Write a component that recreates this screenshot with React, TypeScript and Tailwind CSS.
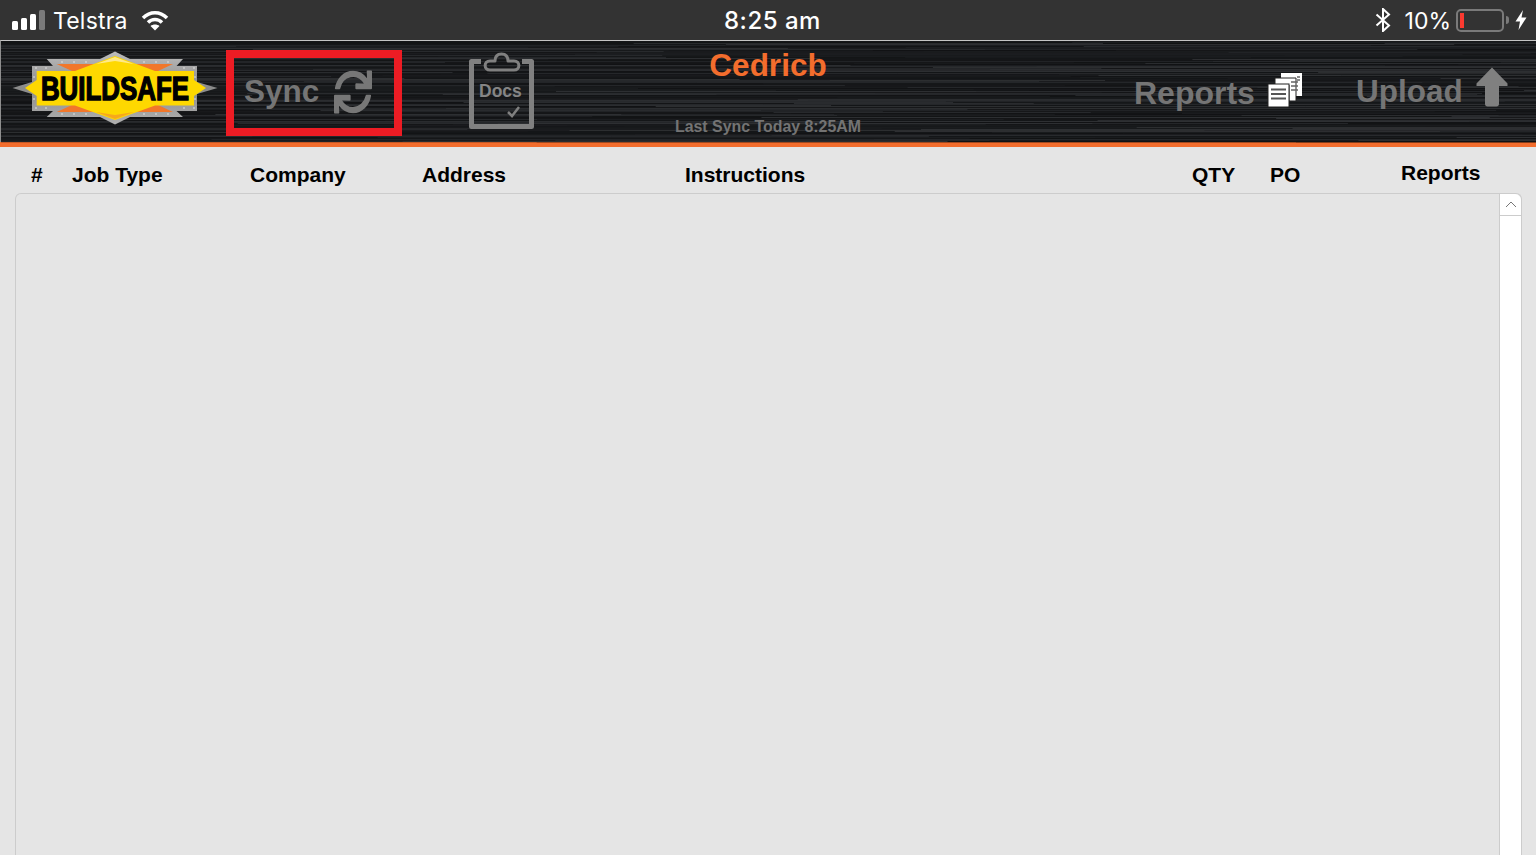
import { FaSync } from "react-icons/fa";

const helv = "font-['Liberation_Sans',Arial,sans-serif]";

const columns = ["#", "Job Type", "Company", "Address", "Instructions", "QTY", "PO"];

// brushed metal streaks for the header background
const makeStreaks = () => {
  const streaks: { x: number; y: number; w: number; light: boolean; o: number }[] = [];
  let seed = 17;
  const rnd = () => {
    seed = (seed * 16807) % 2147483647;
    return seed / 2147483647;
  };
  for (let y = 0; y < 102; y++) {
    let x = -40;
    while (x < 1536) {
      const w = 200 + rnd() * 700;
      const light = rnd() > 0.6;
      streaks.push({ x, y, w, light, o: light ? 0.01 + rnd() * 0.06 : 0.1 + rnd() * 0.35 });
      x += w;
    }
  }
  return streaks;
};

const streaks = makeStreaks();

const rivets = [
  [24, 17], [34, 17], [50, 11], [62, 11], [74, 11], [132, 11], [144, 11], [156, 11], [172, 17], [182, 17],
  [22, 26], [22, 48], [183, 26], [183, 48], [24, 57], [34, 57], [50, 63], [62, 63], [74, 63], [132, 63], [144, 63], [156, 63], [172, 57], [182, 57],
];

const Logo = () => (
  <svg width="206" height="74" viewBox="0 0 206 74" className="shrink-0">
    <defs>
      <linearGradient id="metal" x1="0" y1="0" x2="0" y2="1">
        <stop offset="0" stopColor="#bdbdbd" />
        <stop offset="0.5" stopColor="#8a8a8a" />
        <stop offset="1" stopColor="#b0b0b0" />
      </linearGradient>
    </defs>
    <polygon
      points="0.5,37 20,31 20,15 41,15 34.700,8 88,8 103,0.5 118,8 171,8 164.500,15 185,15 185,31 205.500,37 185,43 185,60 164.500,60 171,66 118,66 103,73.500 88,66 34.700,66 41,60 20,60 20,43"
      fill="url(#metal)"
    />
    {rivets.map(([cx, cy]) => (
      <circle key={`${cx}-${cy}`} cx={cx} cy={cy} r="0.8" fill="#e8e8e8" />
    ))}
    <polygon points="44.700,13 161,13 146,20 60,20" fill="#f1772b" />
    <polygon points="60,54 146,54 161,61 44.700,61" fill="#f1772b" />
    <polygon
      points="24.700,20 63,20 103,5 143,20 182,20 182,29 194,37 182,45 182,54.500 143,54.500 103,69 63,54.500 24.700,54.500 24.700,45 13,37 24.700,29"
      fill="#fed800"
    />
    <polygon points="84,13 103,6 122,13 103,10" fill="#ffe98a" />
    <polygon points="84,61 103,68 122,61 103,64" fill="#f7a81c" />
    <g transform="translate(103,49) scale(0.785,1)">
      <text
        textAnchor="middle"
        fontFamily="Liberation Sans, Arial, sans-serif"
        fontWeight="700"
        fontSize="33"
        stroke="#000"
        strokeWidth="1.400"
        fill="#000"
      >
        BUILDSAFE
      </text>
    </g>
  </svg>
);

const DocsIcon = () => (
  <div className="relative h-[77px] w-[65px] shrink-0">
    <svg width="65" height="77" viewBox="0 0 65 77" fill="none" stroke="#808080" className="absolute inset-0">
      <path d="M12 9.500H2.500V74.500H62.500V9.500H53" strokeWidth="5" strokeLinejoin="round" />
      <path
        d="M21 9C14.500 9 14.500 18 21 18H45C51.500 18 51.500 9 45 9H39C39 4.500 36.500 2 32.500 2S26 4.500 26 9Z"
        strokeWidth="3"
        strokeLinejoin="round"
      />
      <path d="M39 60L43 64L50 55" strokeWidth="2.500" />
    </svg>
    <span className={`${helv} absolute left-[10px] top-[29px] text-[17.500px] font-bold leading-5 text-[#858585]`}>Docs</span>
  </div>
);

const ReportsIcon = () => (
  <svg width="36" height="36" viewBox="0 0 36 36">
    <path d="M14 1H35V24H28V8H14Z" fill="#fff" />
    <path d="M8 6H29V29H22V13H8Z" fill="#fff" stroke="#222" strokeWidth="1" />
    <rect x="1" y="12" width="21" height="23" fill="#fff" stroke="#222" strokeWidth="1" />
    <path d="M4 17.500H19M4 22H19M4 26.500H19" stroke="#555" strokeWidth="2" />
    <path d="M24 10H31M24 14H31M24 18H31M30 5H33M30 8H33" stroke="#666" strokeWidth="1.500" />
  </svg>
);

const StatusBar = () => (
  <div className="flex h-10 items-center bg-[#333333] font-['Inter',sans-serif] text-white">
    <div className="flex w-[53px] items-end gap-[3px] pb-[1px] pl-3">
      <span className="h-[9px] w-[6px] rounded-[1.500px] bg-white" />
      <span className="h-[12px] w-[6px] rounded-[1.500px] bg-white" />
      <span className="h-[16px] w-[6px] rounded-[1.500px] bg-white" />
      <span className="h-[20px] w-[6px] rounded-[1.500px] bg-[#7b7b7b]" />
    </div>
    <span className="mt-[2px] w-[88px] text-[23px] font-normal leading-none tracking-[0.2px]">Telstra</span>
    <svg width="28" height="21" viewBox="0 0 28 21" fill="none" stroke="#fff" strokeWidth="3.500">
      <path d="M2 8C9 1 19 1 26 8" />
      <path d="M7 12.500C11 8.500 17 8.500 21 12.500" />
      <path d="M14 20.500L9.500 16C12 14 16 14 18.500 16Z" fill="#fff" stroke="none" />
    </svg>
    <div className="mt-[2px] flex-1 pl-[555px] text-[24px] font-medium leading-none tracking-[0.5px]">8:25 am</div>
    <svg width="16" height="24" viewBox="0 0 16 24" fill="none" stroke="#fff" strokeWidth="2" className="mr-[14px]">
      <path d="M1.500 6.500L14 17.500L8 23V1L14 6.500L1.500 17.500" />
    </svg>
    <span className="mr-[5px] mt-[2px] text-[23px] font-normal leading-none">10%</span>
    <div className="flex h-[23px] w-[48px] items-center rounded-[5px] border-2 border-[#7a7a7a] px-[2px]">
      <span className="h-[15px] w-[4px] bg-[#fb3a30]" />
    </div>
    <span className="ml-[2px] h-[8px] w-[3px] rounded-r-full bg-[#7a7a7a]" />
    <svg width="12" height="20" viewBox="0 0 12 20" fill="#fff" className="ml-[6px] mr-[9px]">
      <path d="M8 0L0.500 11.500H5L3.500 20L11.500 7.500H6.500Z" />
    </svg>
  </div>
);

const Header = () => (
  <div className={`${helv} relative flex h-[102px] items-start border-t border-l border-t-[#c4c4c4] border-l-[#8f8f8f] bg-[#1f2124] pl-[11px] font-bold text-[#757575]`}>
    <svg width="1536" height="102" className="absolute left-0 top-0">
      {streaks.map((s, i) => (
        <rect key={i} x={s.x} y={s.y} width={s.w} height="1" fill={s.light ? "#ffffff" : "#000000"} opacity={s.o} />
      ))}
    </svg>
    <div className="relative mt-[10px]">
      <Logo />
    </div>
    <div className="relative ml-2 mt-[9px] flex h-[86px] w-[176px] shrink-0 items-center border-[8px] border-[#ed1c24] pl-[10px]">
      <span className="-mt-[2px] text-[31.500px] leading-none">Sync</span>
      <FaSync className="-mt-[2px] ml-[15px] scale-y-[1.15] text-[38px] text-[#777777]" />
    </div>
    <div className="relative ml-[67px] mt-[11px]">
      <DocsIcon />
    </div>
    <div className="relative ml-[66px] flex h-[100px] w-[336px] shrink-0 flex-col items-center">
      <span className="mt-[6px] text-[31.500px] leading-9 text-[#f36d2d]">Cedricb</span>
      <span className="mb-[4px] mt-auto text-[15.900px] leading-5 text-[#737373]">Last Sync Today 8:25AM</span>
    </div>
    <div className="relative ml-[198px] mt-[34px] flex shrink-0 items-center">
      <span className="text-[32px] leading-9">Reports</span>
      <span className="-mt-[6px] ml-[12px]">
        <ReportsIcon />
      </span>
    </div>
    <div className="relative ml-[53px] mt-[32px] flex shrink-0 items-center">
      <span className="text-[31.500px] leading-9">Upload</span>
      <svg width="32" height="40" viewBox="0 0 32 40" fill="#808080" className="-mt-[8px] ml-[13px]">
        <path d="M16 0.500L31.500 16.500V19H23V37C23 38.500 22 39.500 20.500 39.500H11.500C10 39.500 9 38.500 9 37V19H0.500V16.500Z" />
      </svg>
    </div>
  </div>
);

const App = () => (
  <div className={`${helv} flex h-[855px] flex-col overflow-hidden bg-[#e5e5e5]`}>
    <StatusBar />
    <Header />
    <div className="h-[5px] bg-[#f36d2d]" />
    <div className="grid h-[46px] grid-cols-[41px_178px_172px_263px_507px_78px_131px_auto] items-center pl-[31px] text-[21px] font-bold leading-none text-black">
      {columns.map((col) => (
        <span key={col} className="mt-[8px]">
          {col}
        </span>
      ))}
      <span className="mt-[5px]">Reports</span>
    </div>
    <div className="ml-[15px] mr-[14px] flex flex-1 justify-end rounded-t-[6px] border border-b-0 border-[#cccccc]">
      <div className="w-[22px] rounded-tr-[6px] border-l border-[#cccccc] bg-white">
        <div className="flex h-[22px] items-center justify-center border-b border-[#cccccc]">
          <svg width="12" height="7" viewBox="0 0 12 7" fill="none" stroke="#777" strokeWidth="1">
            <path d="M1 6L6 1L11 6" />
          </svg>
        </div>
      </div>
    </div>
  </div>
);

export default App;
